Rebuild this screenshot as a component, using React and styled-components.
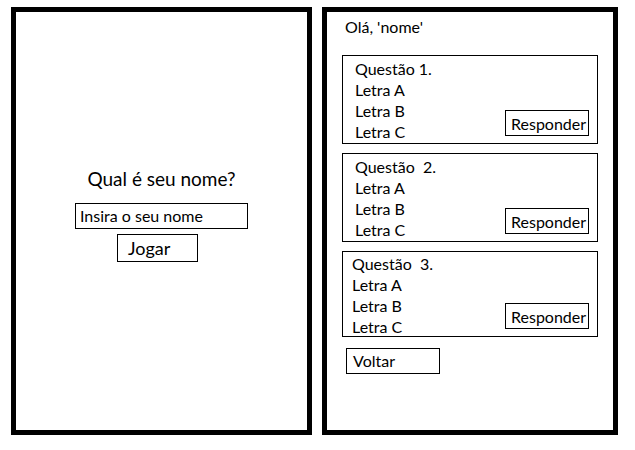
import React, { useState } from 'react';
import styled, { createGlobalStyle } from 'styled-components';

const GlobalStyle = createGlobalStyle`
  body {
    margin: 0;
    background: #fff;
    font-family: Lato, "Open Sans", sans-serif;
    color: #000;
  }
`;

const Page = styled.div`
  display: flex;
  gap: 10px;
  padding: 7px 0 0 11px;
`;

const Panel = styled.div`
  box-sizing: border-box;
  width: ${(p) => p.$width}px;
  height: 428px;
  border: 5px solid #000;
  background: #fff;
`;

const NamePanel = styled(Panel)`
  display: flex;
  flex-direction: column;
  align-items: center;
  justify-content: center;
  padding-bottom: 14px;
`;

const Title = styled.h1`
  margin: 0 0 12px;
  font-size: 19px;
  font-weight: 400;
  line-height: 24px;
`;

const NameInput = styled.input`
  box-sizing: border-box;
  width: 173px;
  height: 26px;
  margin: 0 0 5px;
  padding: 0 4px;
  border: 1px solid #000;
  border-radius: 0;
  outline: none;
  font-family: inherit;
  font-size: 16px;
  color: #000;

  &::placeholder {
    color: #000;
    opacity: 1;
  }
`;

const BoxButton = styled.button`
  box-sizing: border-box;
  display: flex;
  align-items: center;
  width: ${(p) => p.$width}px;
  height: ${(p) => p.$height}px;
  padding: 0 0 0 ${(p) => p.$inset}px;
  border: 1px solid #000;
  border-radius: 0;
  background: #fff;
  font-family: inherit;
  font-size: ${(p) => p.$size}px;
  color: #000;
  cursor: pointer;
`;

const PlayButton = styled(BoxButton)`
  margin-right: 8px;
`;

const QuizPanel = styled(Panel)`
  display: flex;
  flex-direction: column;
  padding: 5px 15px 0;
`;

const Greeting = styled.div`
  padding-left: 3px;
  margin-bottom: 18px;
  font-size: 16px;
  line-height: 20px;
`;

const Card = styled.div`
  box-sizing: border-box;
  display: flex;
  justify-content: space-between;
  align-items: flex-end;
  height: ${(p) => p.$height}px;
  margin-bottom: 9px;
  padding: ${(p) => p.$top}px 8px 7px ${(p) => p.$inset}px;
  border: 1px solid #000;
`;

const Options = styled.div`
  align-self: flex-start;
  font-size: 16px;
  line-height: 21px;
  white-space: pre;
`;

const BackButton = styled(BoxButton)`
  margin: 2px 0 0 4px;
  padding-bottom: 2px;
`;

const questions = [
  { title: 'Questão 1.', height: 89, top: 2, inset: 12 },
  { title: 'Questão  2.', height: 89, top: 2, inset: 12 },
  { title: 'Questão  3.', height: 86, top: 1, inset: 9 },
];

export default function App() {
  const [name, setName] = useState('');

  return (
    <>
      <GlobalStyle />
      <Page>
        <NamePanel $width={301}>
          <Title>Qual é seu nome?</Title>
          <NameInput
            type="text"
            value={name}
            onChange={(e) => setName(e.target.value)}
            placeholder="Insira o seu nome"
          />
          <PlayButton $width={81} $height={28} $inset={10} $size={18}>
            Jogar
          </PlayButton>
        </NamePanel>

        <QuizPanel $width={296}>
          <Greeting>Olá, 'nome'</Greeting>
          {questions.map((q) => (
            <Card key={q.title} $height={q.height} $top={q.top} $inset={q.inset}>
              <Options>
                <div>{q.title}</div>
                <div>Letra A</div>
                <div>Letra B</div>
                <div>Letra C</div>
              </Options>
              <BoxButton $width={84} $height={26} $inset={5} $size={16}>
                Responder
              </BoxButton>
            </Card>
          ))}
          <BackButton $width={94} $height={26} $inset={6} $size={16}>
            Voltar
          </BackButton>
        </QuizPanel>
      </Page>
    </>
  );
}
